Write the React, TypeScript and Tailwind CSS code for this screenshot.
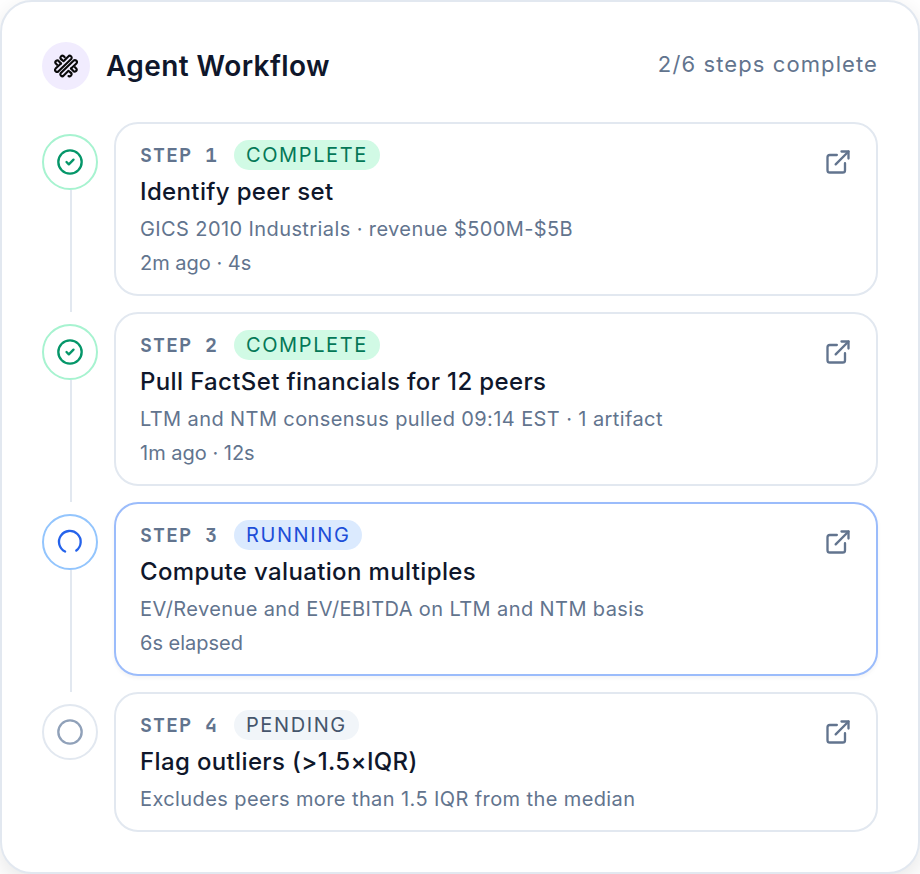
import { CircleCheck, Circle, ExternalLink } from "lucide-react";

type Status = "complete" | "running" | "pending";

interface Step {
  id: number;
  status: Status;
  title: string;
  detail: string;
  meta?: string;
}

const STEPS: Step[] = [
  {
    id: 1,
    status: "complete",
    title: "Identify peer set",
    detail: "GICS 2010 Industrials · revenue $500M-$5B",
    meta: "2m ago · 4s",
  },
  {
    id: 2,
    status: "complete",
    title: "Pull FactSet financials for 12 peers",
    detail: "LTM and NTM consensus pulled 09:14 EST · 1 artifact",
    meta: "1m ago · 12s",
  },
  {
    id: 3,
    status: "running",
    title: "Compute valuation multiples",
    detail: "EV/Revenue and EV/EBITDA on LTM and NTM basis",
    meta: "6s elapsed",
  },
  {
    id: 4,
    status: "pending",
    title: "Flag outliers (>1.5×IQR)",
    detail: "Excludes peers more than 1.5 IQR from the median",
  },
];

const TOTAL_STEPS = 6;

const badgeStyles: Record<Status, string> = {
  complete: "bg-[#d1fae5] text-[#047857]",
  running: "bg-[#dbeafe] text-[#1d4ed8]",
  pending: "bg-slate-100 text-slate-600",
};

const markerStyles: Record<Status, string> = {
  complete: "border-[#a7f3d0] text-[#059669]",
  running: "border-[#93c5fd] text-[#2563eb]",
  pending: "border-slate-200 text-slate-400",
};

function KnotLogo() {
  return (
    <svg
      viewBox="0 0 24 24"
      className="size-6"
      fill="none"
      stroke="#0a0a0a"
      strokeWidth="2.1"
      strokeLinecap="round"
      strokeLinejoin="round"
      aria-hidden="true"
    >
      <path d="M7.500 5.500 9.500 7.200 14.300 2.500a1.900 1.900 0 0 1 2.900 2.500L4.500 17.200a1.900 1.900 0 0 1-2.900-2.600L7 9.500" />
      <path d="M7.500 5.500a1.900 1.900 0 0 1 2-3.500l1.200 1.200" />
      <path d="M7 9.500 4.800 7.200a1.900 1.900 0 0 0-3 2.400l1.200 1.200" />
      <path d="M16.500 18.500 14.500 16.800 9.700 21.500a1.900 1.900 0 0 1-2.900-2.500L19.500 6.800a1.900 1.900 0 0 1 2.900 2.600L17 14.500" />
      <path d="M16.500 18.500a1.900 1.900 0 0 1-2 3.500" />
      <path d="M17 14.500 19.200 16.800a1.900 1.900 0 0 0 3-2.400l-1.200-1.200" />
    </svg>
  );
}

function StatusIcon({ status }: { status: Status }) {
  if (status === "complete") return <CircleCheck className="size-7" />;
  if (status === "pending") return <Circle className="size-7" />;
  return (
    <svg viewBox="0 0 24 24" className="size-7" fill="none" stroke="currentColor" strokeWidth="2" strokeLinecap="round">
      <path d="M7.800 20.200a9.300 9.300 0 1 1 9.600-.9" />
    </svg>
  );
}

function StepRow({ step, last }: { step: Step; last: boolean }) {
  return (
    <li className="flex gap-4">
      <div className="flex w-14 shrink-0 flex-col items-center pt-3">
        <div
          className={`flex size-14 shrink-0 items-center justify-center rounded-full border-2 bg-white ${markerStyles[step.status]}`}
        >
          <StatusIcon status={step.status} />
        </div>
        {!last && <div className="ml-0.5 w-0.5 flex-1 bg-slate-200" />}
      </div>

      <div className={last ? "min-w-0 flex-1" : "min-w-0 flex-1 pb-4"}>
        <div
          className={`flex items-start justify-between rounded-3xl border-2 bg-white px-6 py-4 ${
            step.status === "running"
              ? "border-[#9bbcfb] shadow-[0_2px_4px_rgba(15,23,42,0.05)]"
              : "border-slate-200"
          }`}
        >
          <div className="min-w-0">
            <div className="flex items-center gap-4">
              <span className="font-['JetBrains_Mono','Liberation_Mono',monospace] text-xl leading-[30px] font-semibold tracking-wider text-slate-500">
                STEP {step.id}
              </span>
              <span
                className={`rounded-full px-3 text-xl leading-[30px] tracking-[0.08em] uppercase ${badgeStyles[step.status]}`}
              >
                {step.status}
              </span>
            </div>
            <h3 className="mt-1 text-2xl leading-9 font-medium tracking-[0.015em] text-slate-900">{step.title}</h3>
            <p className="mt-1 text-xl leading-[30px] tracking-[0.02em] text-slate-500">{step.detail}</p>
            {step.meta && <p className="mt-1 text-xl leading-[30px] text-slate-500">{step.meta}</p>}
          </div>
          <button type="button" aria-label={`Open step ${step.id}`} className="mt-2 shrink-0 text-slate-500">
            <ExternalLink className="size-7" />
          </button>
        </div>
      </div>
    </li>
  );
}

export default function App() {
  const completed = STEPS.filter((s) => s.status === "complete").length;

  return (
    <section className="rounded-[32px] border-2 border-slate-200 bg-white p-10 font-['Inter',sans-serif] shadow-[0_8px_24px_rgba(0,0,0,0.1)]">
      <header className="mb-8 flex items-center justify-between">
        <div className="flex items-center gap-4">
          <div className="flex size-12 items-center justify-center rounded-full bg-[#f1ecfe]">
            <KnotLogo />
          </div>
          <h2 className="text-[28px] leading-10 font-semibold tracking-[0.015em] text-slate-900">Agent Workflow</h2>
        </div>
        <span className="pb-1 text-[22px] leading-8 tracking-wider text-slate-500">
          {completed}/{TOTAL_STEPS} steps complete
        </span>
      </header>

      <ol>
        {STEPS.map((step, i) => (
          <StepRow key={step.id} step={step} last={i === STEPS.length - 1} />
        ))}
      </ol>
    </section>
  );
}
